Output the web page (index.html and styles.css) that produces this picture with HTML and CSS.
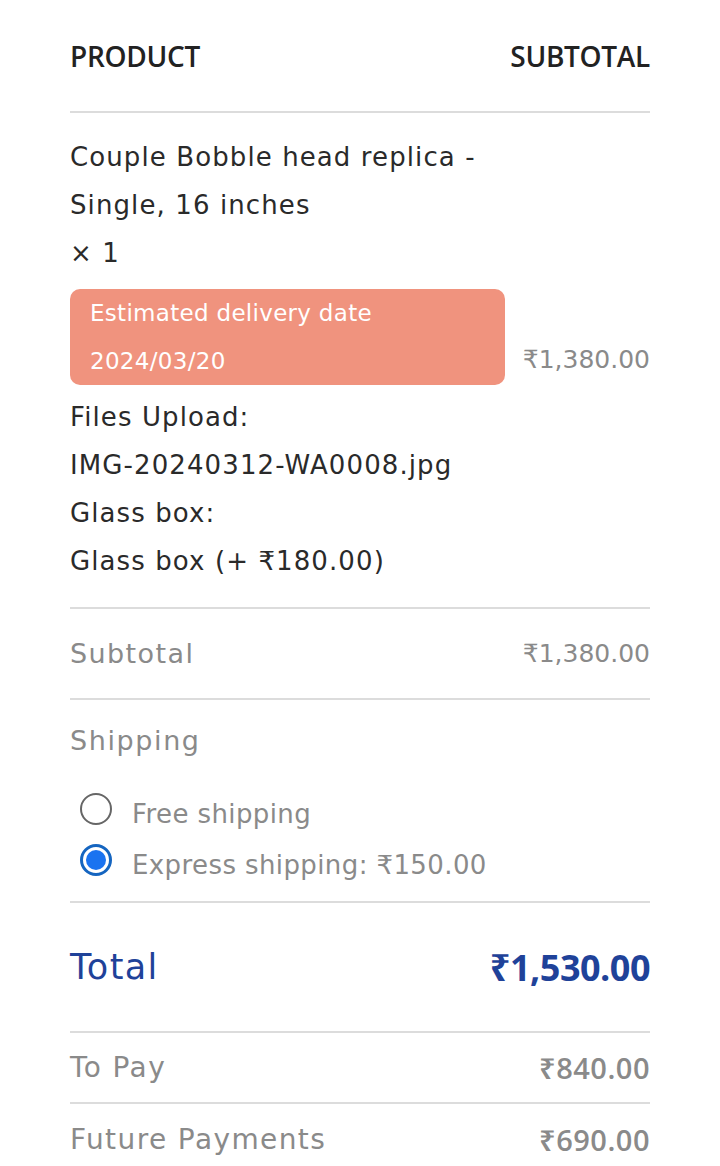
FILE: index.html
```html
<!DOCTYPE html>
<html>
<head>
<meta charset="utf-8">
<link rel="stylesheet" href="styles.css">
</head>
<body>
<div class="order">
  <div class="row head">
    <span>PRODUCT</span>
    <span>SUBTOTAL</span>
  </div>
  <div class="row item">
    <div class="item-info">
      <div class="line">Couple Bobble head replica -</div>
      <div class="line">Single, 16 inches</div>
      <div class="line">× 1</div>
      <div class="delivery">
        <div class="dline">Estimated delivery date</div>
        <div class="dline">2024/03/20</div>
      </div>
      <div class="line">Files Upload:</div>
      <div class="line">IMG-20240312-WA0008.jpg</div>
      <div class="line">Glass box:</div>
      <div class="line">Glass box (+ ₹180.00)</div>
    </div>
    <div class="price">₹1,380.00</div>
  </div>
  <div class="row sub">
    <span class="label">Subtotal</span>
    <span class="price">₹1,380.00</span>
  </div>
  <div class="row ship">
    <div class="ship-title">Shipping</div>
    <label class="opt"><span class="radio"></span><span>Free shipping</span></label>
    <label class="opt"><span class="radio on"></span><span>Express shipping: ₹150.00</span></label>
  </div>
  <div class="row total">
    <span class="label">Total</span>
    <span class="amount">₹1,530.00</span>
  </div>
  <div class="row pay">
    <span class="label">To Pay</span>
    <span class="amount">₹840.00</span>
  </div>
  <div class="row pay last">
    <span class="label">Future Payments</span>
    <span class="amount">₹690.00</span>
  </div>
</div>
</body>
</html>
```
FILE: styles.css
```css
* { box-sizing: border-box; }
body {
  margin: 0;
  background: #fff;
  font-family: "DejaVu Sans", "Noto Sans", sans-serif;
  color: #2a2a2a;
}
.order {
  padding: 0 70px;
}
.row {
  display: flex;
  justify-content: space-between;
  align-items: center;
  border-bottom: 2px solid #dcdcdc;
}
.head {
  height: 113px;
  font-family: "Open Sans", "Noto Sans", sans-serif;
  font-size: 28px;
  font-weight: 600;
  letter-spacing: -0.3px;
  color: #222;
}
.item {
  padding: 20px 0 22px;
}
.line {
  font-size: 26px;
  line-height: 48px;
  letter-spacing: 1.1px;
}
.delivery {
  width: 435px;
  background: #f0937e;
  border-radius: 10px;
  color: #fff;
  padding: 0 20px;
  margin: 12px 0 8px;
}
.dline {
  font-size: 23px;
  line-height: 48px;
  letter-spacing: 0.3px;
}
.price {
  font-size: 25px;
  color: #8a8a8a;
}
.sub {
  height: 91px;
  color: #8a8a8a;
}
.sub .label {
  font-size: 27px;
  letter-spacing: 1.4px;
}
.ship {
  display: block;
  padding: 18px 0 9px;
}
.ship-title {
  font-size: 27px;
  line-height: 46px;
  letter-spacing: 1.6px;
  color: #8a8a8a;
  margin-bottom: 24px;
}
.opt {
  display: flex;
  align-items: center;
  gap: 20px;
  font-size: 26px;
  line-height: 53px;
  letter-spacing: 0.4px;
  color: #8a8a8a;
  padding-left: 10px;
}
.opt:last-child {
  margin-top: -2px;
}
.radio {
  width: 32px;
  height: 32px;
  border-radius: 50%;
  border: 2px solid #666;
  flex: none;
  margin-top: -12px;
  position: relative;
}
.radio.on {
  border: 3px solid #1565c0;
}
.radio.on::after {
  content: "";
  position: absolute;
  left: 3px;
  top: 3px;
  width: 20px;
  height: 20px;
  border-radius: 50%;
  background: #1a73f0;
}
.total {
  height: 130px;
  color: #1f4299;
}
.total .label {
  font-size: 35px;
  letter-spacing: 1.4px;
}
.total .amount {
  font-family: "Open Sans", "Noto Sans", sans-serif;
  font-weight: 700;
  font-size: 36px;
  letter-spacing: -0.5px;
}
.pay {
  height: 71px;
  color: #8a8a8a;
}
.pay .label {
  font-size: 28px;
  letter-spacing: 1.4px;
}
.pay .amount {
  font-family: "Open Sans", "Noto Sans", sans-serif;
  font-weight: 600;
  font-size: 29px;
  letter-spacing: 0.5px;
}
.pay.last {
  border-bottom: none;
}
```
